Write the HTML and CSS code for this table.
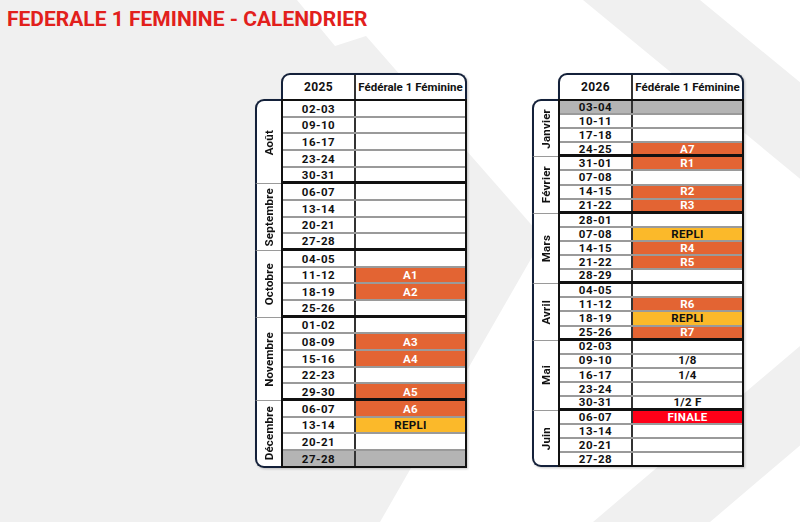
FILE: index.html
```html
<!DOCTYPE html>
<html lang="fr">
<head>
<meta charset="utf-8">
<title>Fédérale 1 Féminine - Calendrier</title>
<link rel="stylesheet" href="styles.css">
</head>
<body>
<div class="page">
  <svg class="bg" width="800" height="522" viewBox="0 0 800 522" aria-hidden="true">
    <polygon points="0,0 297,0 335,46 366,36 543,238 380,522 0,522" />
    <polygon points="583,0 700,0 1017,261 710,522 593,522 900,261" />
  </svg>

  <h1 class="title">FEDERALE 1 FEMININE - CALENDRIER</h1>

  <div class="tables">
    <section class="cal cal-a">
      <div class="head"><div class="y">2025</div><div class="c">Fédérale 1 Féminine</div></div>
      <div class="body">
        <div class="grp">
          <div class="mon"><span>Août</span></div>
          <div class="rows">
            <div class="row"><span class="d">02-03</span><span class="e"></span></div>
            <div class="row"><span class="d">09-10</span><span class="e"></span></div>
            <div class="row"><span class="d">16-17</span><span class="e"></span></div>
            <div class="row"><span class="d">23-24</span><span class="e"></span></div>
            <div class="row"><span class="d">30-31</span><span class="e"></span></div>
          </div>
        </div>
        <div class="grp">
          <div class="mon"><span>Septembre</span></div>
          <div class="rows">
            <div class="row"><span class="d">06-07</span><span class="e"></span></div>
            <div class="row"><span class="d">13-14</span><span class="e"></span></div>
            <div class="row"><span class="d">20-21</span><span class="e"></span></div>
            <div class="row"><span class="d">27-28</span><span class="e"></span></div>
          </div>
        </div>
        <div class="grp">
          <div class="mon"><span>Octobre</span></div>
          <div class="rows">
            <div class="row"><span class="d">04-05</span><span class="e"></span></div>
            <div class="row"><span class="d">11-12</span><span class="e orange">A1</span></div>
            <div class="row"><span class="d">18-19</span><span class="e orange">A2</span></div>
            <div class="row"><span class="d">25-26</span><span class="e"></span></div>
          </div>
        </div>
        <div class="grp">
          <div class="mon"><span>Novembre</span></div>
          <div class="rows">
            <div class="row"><span class="d">01-02</span><span class="e"></span></div>
            <div class="row"><span class="d">08-09</span><span class="e orange">A3</span></div>
            <div class="row"><span class="d">15-16</span><span class="e orange">A4</span></div>
            <div class="row"><span class="d">22-23</span><span class="e"></span></div>
            <div class="row"><span class="d">29-30</span><span class="e orange">A5</span></div>
          </div>
        </div>
        <div class="grp">
          <div class="mon"><span>Décembre</span></div>
          <div class="rows">
            <div class="row"><span class="d">06-07</span><span class="e orange">A6</span></div>
            <div class="row"><span class="d">13-14</span><span class="e yellow">REPLI</span></div>
            <div class="row"><span class="d">20-21</span><span class="e"></span></div>
            <div class="row off"><span class="d">27-28</span><span class="e"></span></div>
          </div>
        </div>
      </div>
    </section>

    <section class="cal cal-b">
      <div class="head"><div class="y">2026</div><div class="c">Fédérale 1 Féminine</div></div>
      <div class="body">
        <div class="grp">
          <div class="mon"><span>Janvier</span></div>
          <div class="rows">
            <div class="row off"><span class="d">03-04</span><span class="e"></span></div>
            <div class="row"><span class="d">10-11</span><span class="e"></span></div>
            <div class="row"><span class="d">17-18</span><span class="e"></span></div>
            <div class="row"><span class="d">24-25</span><span class="e orange">A7</span></div>
          </div>
        </div>
        <div class="grp">
          <div class="mon"><span>Février</span></div>
          <div class="rows">
            <div class="row"><span class="d">31-01</span><span class="e orange">R1</span></div>
            <div class="row"><span class="d">07-08</span><span class="e"></span></div>
            <div class="row"><span class="d">14-15</span><span class="e orange">R2</span></div>
            <div class="row"><span class="d">21-22</span><span class="e orange">R3</span></div>
          </div>
        </div>
        <div class="grp">
          <div class="mon"><span>Mars</span></div>
          <div class="rows">
            <div class="row"><span class="d">28-01</span><span class="e"></span></div>
            <div class="row"><span class="d">07-08</span><span class="e yellow">REPLI</span></div>
            <div class="row"><span class="d">14-15</span><span class="e orange">R4</span></div>
            <div class="row"><span class="d">21-22</span><span class="e orange">R5</span></div>
            <div class="row"><span class="d">28-29</span><span class="e"></span></div>
          </div>
        </div>
        <div class="grp">
          <div class="mon"><span>Avril</span></div>
          <div class="rows">
            <div class="row"><span class="d">04-05</span><span class="e"></span></div>
            <div class="row"><span class="d">11-12</span><span class="e orange">R6</span></div>
            <div class="row"><span class="d">18-19</span><span class="e yellow">REPLI</span></div>
            <div class="row"><span class="d">25-26</span><span class="e orange">R7</span></div>
          </div>
        </div>
        <div class="grp">
          <div class="mon"><span>Mai</span></div>
          <div class="rows">
            <div class="row"><span class="d">02-03</span><span class="e"></span></div>
            <div class="row"><span class="d">09-10</span><span class="e">1/8</span></div>
            <div class="row"><span class="d">16-17</span><span class="e">1/4</span></div>
            <div class="row"><span class="d">23-24</span><span class="e"></span></div>
            <div class="row"><span class="d">30-31</span><span class="e">1/2 F</span></div>
          </div>
        </div>
        <div class="grp">
          <div class="mon"><span>Juin</span></div>
          <div class="rows">
            <div class="row"><span class="d">06-07</span><span class="e red">FINALE</span></div>
            <div class="row"><span class="d">13-14</span><span class="e"></span></div>
            <div class="row"><span class="d">20-21</span><span class="e"></span></div>
            <div class="row"><span class="d">27-28</span><span class="e"></span></div>
          </div>
        </div>
      </div>
    </section>
  </div>
</div>
</body>
</html>
```

FILE: styles.css
```css
* {
  box-sizing: border-box;
  margin: 0;
  padding: 0;
}

body {
  margin: 0;
  background: #ffffff;
  font-family: Roboto, "Liberation Sans", sans-serif;
  color: #111111;
}

.page {
  position: relative;
  width: 800px;
  height: 522px;
  overflow: hidden;
}

.bg {
  position: absolute;
  left: 0;
  top: 0;
  z-index: 0;
}

.bg polygon {
  fill: #f0f0f0;
}

.title {
  position: relative;
  z-index: 1;
  padding: 8px 0 0 7px;
  font-size: 21px;
  line-height: 22px;
  font-weight: 700;
  color: #e2201c;
  letter-spacing: 0;
}

.tables {
  position: relative;
  z-index: 1;
  display: flex;
  gap: 65px;
  padding-left: 255px;
  margin-top: 43px;
}

.cal {
  width: 212px;
  filter: drop-shadow(1px 1px 1px rgba(0, 0, 0, 0.22));
}

.cal-a { --rh: 16.68px; --pt: 2px; }
.cal-b { --rh: 14.1px; --pt: 1px; }

.head {
  margin-left: 26px;
  height: 26px;
  display: flex;
  background: #ffffff;
  border: 2px solid #14213a;
  border-bottom: none;
  border-radius: 9px 9px 0 0;
  font-weight: 700;
}

.head .y {
  width: 73px;
  border-right: 2px solid #333333;
  display: flex;
  align-items: center;
  justify-content: center;
  font-size: 12px;
  letter-spacing: 0.4px;
}

.head .c {
  flex: 1;
  display: flex;
  align-items: center;
  justify-content: center;
  font-size: 11.5px;
  white-space: nowrap;
}

.grp {
  display: flex;
}

.mon {
  width: 26px;
  background: #ffffff;
  border-left: 2px solid #14213a;
  border-bottom: 1px solid #9a9a9a;
  display: flex;
  align-items: center;
  justify-content: center;
}

.mon span {
  writing-mode: vertical-rl;
  transform: rotate(180deg);
  font-size: 11.5px;
  font-weight: 700;
  letter-spacing: 0.2px;
}

.grp:first-child .mon {
  border-top: 2px solid #14213a;
  border-top-left-radius: 9px;
}

.grp:last-child .mon {
  border-bottom: 2px solid #14213a;
  border-bottom-left-radius: 9px;
}

.rows {
  flex: 1;
  border-left: 2px solid #111111;
  border-right: 2px solid #111111;
}

.grp:first-child .rows {
  border-top: 2px solid #111111;
}

.row {
  display: flex;
  height: var(--rh);
  background: #ffffff;
  border-bottom: 2px solid #9a9a9a;
  font-weight: 700;
  font-size: 11.5px;
  line-height: 1;
}

.row:last-child {
  border-bottom: 3px solid #111111;
}

.grp:last-child .row:last-child {
  border-bottom: 2px solid #111111;
}

.d,
.e {
  padding-top: var(--pt);
  display: flex;
  align-items: center;
  justify-content: center;
}

.d {
  width: 73px;
  border-right: 2px solid #333333;
  letter-spacing: 0.5px;
}

.e {
  flex: 1;
  letter-spacing: 0.3px;
}

.row.off .d,
.row.off .e {
  background: #b4b4b4;
}

.orange {
  background: #e36433;
  color: #ffffff;
}

.yellow {
  background: #fbb92a;
  color: #111111;
}

.red {
  background: #ff0018;
  color: #ffffff;
}
```
